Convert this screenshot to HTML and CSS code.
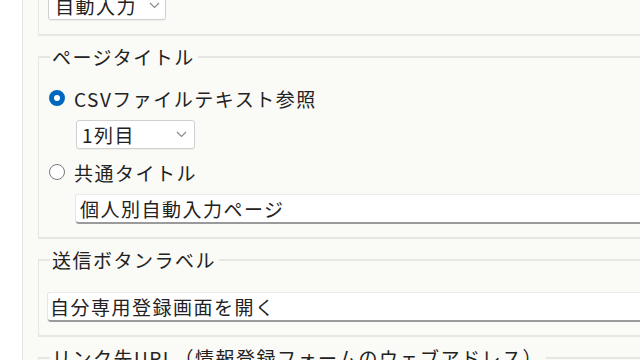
FILE: index.html
```html
<!DOCTYPE html>
<html lang="ja">
<head>
  <meta charset="UTF-8" />
  <title>ページ設定</title>
  <link rel="stylesheet" href="styles.css">
</head>
<body>
  <div class="sidebar"></div>
  <div class="main">
    <fieldset class="group first">
      <div class="select wide">
        <span>自動入力</span>
        <svg class="chev" width="11" height="7" viewBox="0 0 11 7"><polyline points="1,1 5.5,5.5 10,1" fill="none" stroke="#8a8a8a" stroke-width="1.2"/></svg>
      </div>
    </fieldset>

    <fieldset class="group">
      <legend>ページタイトル</legend>
      <label class="radio-row">
        <span class="radio checked"></span>
        <span>CSVファイルテキスト参照</span>
      </label>
      <div class="indent">
        <div class="select col">
          <span>1列目</span>
          <svg class="chev" width="11" height="7" viewBox="0 0 11 7"><polyline points="1,1 5.5,5.5 10,1" fill="none" stroke="#8a8a8a" stroke-width="1.2"/></svg>
        </div>
      </div>
      <label class="radio-row">
        <span class="radio"></span>
        <span>共通タイトル</span>
      </label>
      <div class="indent last">
        <div class="textbox">個人別自動入力ページ</div>
      </div>
    </fieldset>

    <fieldset class="group">
      <legend>送信ボタンラベル</legend>
      <div class="textbox label-box">自分専用登録画面を開く</div>
    </fieldset>

    <fieldset class="group">
      <legend>リンク先URL（情報登録フォームのウェブアドレス）</legend>
    </fieldset>
  </div>
</body>
</html>
```

FILE: styles.css
```css
html, body {
  margin: 0;
  padding: 0;
  height: 100%;
  overflow: hidden;
}
body {
  display: flex;
  background: #fafaf6;
  color: #222222;
  font-family: "Noto Sans CJK JP", "Noto Sans", sans-serif;
  font-size: 19px;
  letter-spacing: 1.5px;
}
.sidebar {
  width: 22px;
  flex: none;
  background: #ffffff;
  border-right: 1px solid #e4e4e4;
}
.main {
  flex: 1;
  padding-left: 15px;
  margin-top: -35px;
}
.group {
  margin: 0 -60px 9px 0;
  padding: 0 9px 13px 9px;
  border: 2px solid #e6e6e3;
  border-width: 2px 2px 2px 1px;
}
.group.first {
  padding-top: 24px;
  padding-bottom: 14px;
}
legend {
  margin-left: 2px;
  padding: 0 3px 0 2px;
  line-height: 24px;
}
.select {
  display: flex;
  align-items: center;
  justify-content: space-between;
  box-sizing: border-box;
  height: 29px;
  padding: 0 5px 0 5px;
  background: #ffffff;
  border: 1px solid #d0d0d0;
  border-radius: 3px;
  box-shadow: 0 1px 1px #0000000d;
}
.select.wide { width: 118px; padding-left: 6px; }
.select.col { width: 119px; padding-right: 7px; }
.select .chev { margin-bottom: 1px; }
.radio-row {
  display: flex;
  align-items: center;
  gap: 9px;
  height: 26px;
}
.group .radio-row:first-of-type { margin-top: 16px; }
.radio {
  box-sizing: border-box;
  width: 16px;
  height: 16px;
  margin-left: 1px;
  border-radius: 50%;
  border: 1.5px solid #7a7a7a;
  background: #ffffff;
  flex: none;
}
.radio.checked {
  border: 5px solid #0067c0;
}
.indent {
  padding-left: 28px;
  margin: 9px 0 10px 0;
}
.indent.last {
  margin-bottom: 0;
}
.textbox {
  box-sizing: border-box;
  height: 30px;
  padding: 0 4px;
  line-height: 27px;
  background: #ffffff;
  border-top: 1px solid #ececec;
  border-bottom: 2px solid #9a9a9a;
  border-radius: 3px 0 0 3px;
  box-shadow: -1px 0 0 #e6e6e6;
}
.label-box {
  margin-top: 20px;
  padding-left: 2px;
}
```
